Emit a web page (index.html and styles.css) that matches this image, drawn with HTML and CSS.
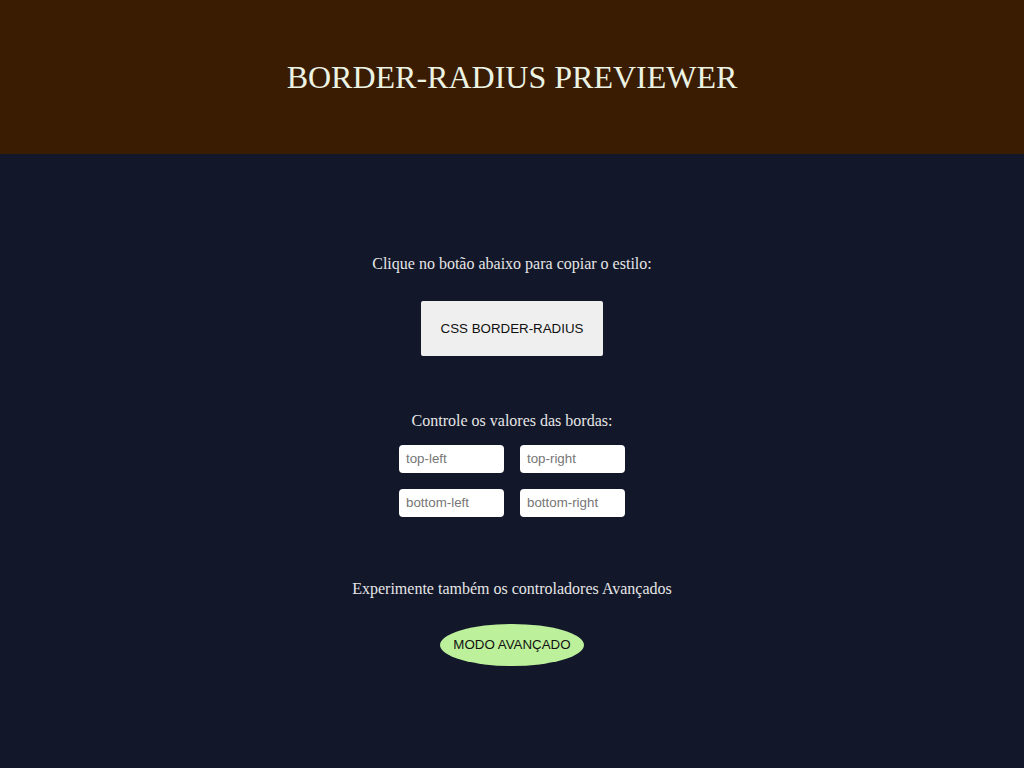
FILE: index.html
```html
<!DOCTYPE html>
<html lang="pt">
<head>
<meta charset="utf-8">
<title>Border-Radius Previewer</title>
<link rel="stylesheet" href="styles.css">
</head>
<body>
<header class="top">
  <h1 class="title">BORDER-RADIUS PREVIEWER</h1>
</header>
<main class="main">
  <p class="label label-copy">Clique no botão abaixo para copiar o estilo:</p>
  <button class="copy-btn" type="button">CSS BORDER-RADIUS</button>
  <p class="label label-control">Controle os valores das bordas:</p>
  <div class="inputs">
    <input class="field" type="text" placeholder="top-left">
    <input class="field" type="text" placeholder="top-right">
    <input class="field" type="text" placeholder="bottom-left">
    <input class="field" type="text" placeholder="bottom-right">
  </div>
  <p class="label label-adv">Experimente também os controladores Avançados</p>
  <button class="adv-btn" type="button">MODO AVANÇADO</button>
</main>
</body>
</html>
```

FILE: styles.css
```css
html, body {
  margin: 0;
  padding: 0;
}
body {
  background: #12172a;
  font-family: "Liberation Serif", "Times New Roman", serif;
  color: #e6e6e6;
  min-height: 768px;
}
.top {
  background: #3a1c03;
  height: 154px;
  display: flex;
  align-items: center;
  justify-content: center;
}
.title {
  margin: 0;
  font-weight: normal;
  font-size: 32px;
  color: #ecf3e3;
  letter-spacing: 0;
}
.main {
  display: flex;
  flex-direction: column;
  align-items: center;
  padding-top: 101px;
}
.label {
  margin: 0;
  font-size: 16px;
  line-height: 18px;
  color: #e6e6e6;
}
.copy-btn {
  margin-top: 28px;
  width: 182px;
  height: 55px;
  padding: 0;
  border: none;
  border-radius: 2px;
  background: #efefef;
  color: #111;
  font-family: "Liberation Sans", Arial, sans-serif;
  font-size: 13.33px;
}
.label-control {
  margin-top: 56px;
}
.inputs {
  margin-top: 15px;
  display: grid;
  grid-template-columns: 105px 105px;
  gap: 16px;
}
.field {
  box-sizing: border-box;
  width: 105px;
  height: 28px;
  border: none;
  border-radius: 4px;
  background: #fff;
  padding: 0 7px 1px;
  font-family: "Liberation Sans", Arial, sans-serif;
  font-size: 13.33px;
  color: #222;
}
.field::placeholder {
  color: #767676;
}
.label-adv {
  margin-top: 63px;
}
.adv-btn {
  margin-top: 26px;
  width: 144px;
  height: 42px;
  padding: 0 0 1px;
  border: none;
  border-radius: 50%;
  background: #bdf09b;
  color: #111;
  font-family: "Liberation Sans", Arial, sans-serif;
  font-size: 13.33px;
}
```
